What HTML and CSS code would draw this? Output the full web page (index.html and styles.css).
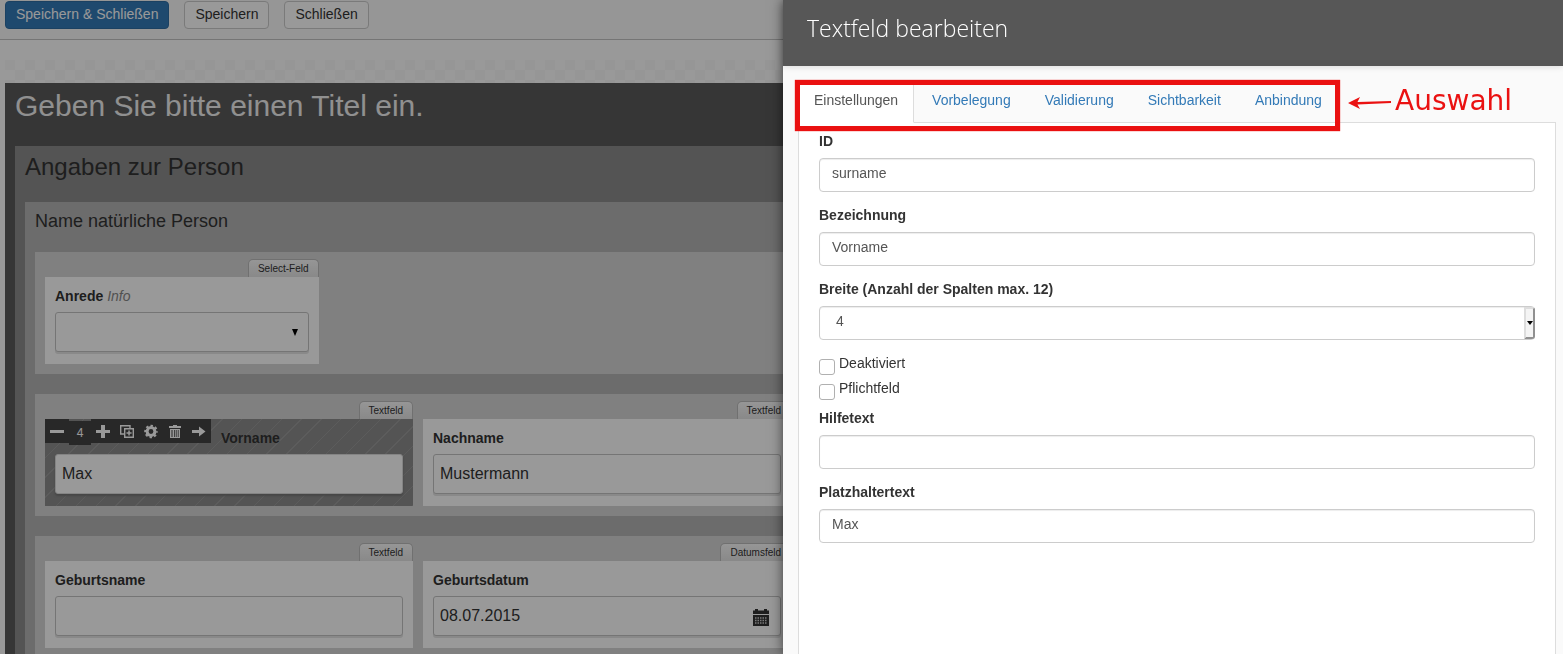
FILE: index.html
```html
<!DOCTYPE html>
<html lang="de">
<head>
<meta charset="utf-8">
<title>Textfeld bearbeiten</title>
<link rel="stylesheet" href="styles.css">
</head>
<body>
<div class="app">
  <header class="toolbar">
    <button class="btn btn-primary" type="button">Speichern &amp; Schließen</button>
    <button class="btn" type="button">Speichern</button>
    <button class="btn" type="button">Schließen</button>
  </header>

  <main class="canvas">
    <section class="form">
      <h1 class="form-title">Geben Sie bitte einen Titel ein.</h1>
      <section class="page">
        <h2 class="page-title">Angaben zur Person</h2>
        <section class="group">
          <h3 class="group-title">Name natürliche Person</h3>

          <div class="row">
            <div class="card span-3">
              <span class="tag">Select-Feld</span>
              <label class="card-label" for="anrede">Anrede <em class="info">Info</em></label>
              <div class="control">
                <select class="field" id="anrede"><option></option></select>
                <svg class="caret" viewBox="0 0 6 7" aria-hidden="true"><path d="M0 0h6L3 7z"/></svg>
              </div>
            </div>
          </div>

          <div class="row">
            <div class="card span-4 selected">
              <span class="tag">Textfeld</span>
              <div class="tools">
                <button class="tool" type="button" aria-label="Schmaler"><svg viewBox="0 0 24 24"><path d="M5 11h14v3H5z"/></svg></button>
                <span class="tool-value">4</span>
                <button class="tool" type="button" aria-label="Breiter"><svg viewBox="0 0 24 24"><path d="M10 6h4v5h5v3h-5v5h-4v-5H5v-3h5z"/></svg></button>
                <button class="tool" type="button" aria-label="Duplizieren"><svg viewBox="0 0 24 24"><path class="line" d="M9 15H5.700V6.700H15V9M9.700 9.700h8.600v8.600H9.700z"/><path d="M13.300 11.500h1.500v1.800h1.800v1.500h-1.800v1.800h-1.500v-1.800h-1.800v-1.500h1.800z"/></svg></button>
                <button class="tool" type="button" aria-label="Einstellungen"><svg viewBox="0 0 24 24"><g fill="none" stroke="currentColor"><circle cx="12" cy="12.500" r="3.900" stroke-width="3"/><circle cx="12" cy="12.500" r="5.800" stroke-width="2" stroke-dasharray="2.400 2.155" stroke-dashoffset="1.200"/></g></svg></button>
                <button class="tool" type="button" aria-label="Löschen"><svg viewBox="0 0 24 24"><path fill-rule="evenodd" d="M10 6h4v1h4v2H6V7h4zM7 10h10v9H7zM8.500 11v7h1v-7zM11 11v7h.8v-7zM12.800 11v7h.8v-7zM14.800 11v7h.8v-7z"/></svg></button>
                <button class="tool" type="button" aria-label="Verschieben"><svg viewBox="0 0 24 24"><path d="M5 11h7V7.500l6.500 5L12 17.500V14H5z"/></svg></button>
              </div>
              <label class="card-label" for="vorname">Vorname</label>
              <div class="control"><input class="field" id="vorname" type="text" value="Max"></div>
            </div>
            <div class="card span-4">
              <span class="tag">Textfeld</span>
              <label class="card-label" for="nachname">Nachname</label>
              <div class="control"><input class="field" id="nachname" type="text" value="Mustermann"></div>
            </div>
          </div>

          <div class="row">
            <div class="card span-4">
              <span class="tag">Textfeld</span>
              <label class="card-label" for="geburtsname">Geburtsname</label>
              <div class="control"><input class="field" id="geburtsname" type="text"></div>
            </div>
            <div class="card span-4">
              <span class="tag">Datumsfeld</span>
              <label class="card-label" for="geburtsdatum">Geburtsdatum</label>
              <div class="control">
                <input class="field" id="geburtsdatum" type="text" value="08.07.2015">
                <svg class="calendar" viewBox="0 0 16 17" aria-hidden="true"><path d="M0 1.500h2V0h3v1.500h6V0h3v1.500h2V5H0zM0 6h16v11H0z"/><path class="grid" d="M2 9h12.500M2 11.500h12.500M2 14h12.500"/></svg>
              </div>
            </div>
          </div>
        </section>
      </section>
    </section>
  </main>
  <div class="backdrop"></div>
</div>

<aside class="panel">
  <header class="panel-head"><h2 class="panel-title">Textfeld bearbeiten</h2></header>
  <div class="panel-body">
    <nav class="tabs">
      <a class="tab active" href="#einstellungen">Einstellungen</a>
      <a class="tab" href="#vorbelegung">Vorbelegung</a>
      <a class="tab" href="#validierung">Validierung</a>
      <a class="tab" href="#sichtbarkeit">Sichtbarkeit</a>
      <a class="tab" href="#anbindung">Anbindung</a>
      <div class="marker">
        <div class="marker-note">
          <svg class="marker-arrow" viewBox="0 0 43 16" aria-hidden="true"><path d="M0 10 12 4 9.500 9 43 8v2L9.500 11.500 12 16z"/></svg>
          <span>Auswahl</span>
        </div>
      </div>
    </nav>
    <form class="settings" id="einstellungen">
      <div class="setting"><label class="setting-label" for="id">ID</label><input class="input" id="id" type="text" value="surname"></div>
      <div class="setting"><label class="setting-label" for="bez">Bezeichnung</label><input class="input" id="bez" type="text" value="Vorname"></div>
      <div class="setting">
        <label class="setting-label" for="breite">Breite (Anzahl der Spalten max. 12)</label>
        <div class="select">
          <select class="input" id="breite"><option>4</option></select>
          <span class="select-button"><svg viewBox="0 0 6 4" aria-hidden="true"><path d="M0 0h6L3 4z"/></svg></span>
        </div>
      </div>
      <div class="checks">
        <label class="check"><input class="box" type="checkbox">Deaktiviert</label>
        <label class="check"><input class="box" type="checkbox">Pflichtfeld</label>
      </div>
      <div class="setting"><label class="setting-label" for="hilfe">Hilfetext</label><input class="input" id="hilfe" type="text"></div>
      <div class="setting"><label class="setting-label" for="platz">Platzhaltertext</label><input class="input" id="platz" type="text" value="Max"></div>
    </form>
  </div>
</aside>
</body>
</html>
```

FILE: styles.css
```css
* { box-sizing: border-box; }

body {
  margin: 0;
  color: #333;
  background: #fff;
  font: 14px/20px "Liberation Sans", Arial, sans-serif;
}

h1, h2, h3 { margin: 0; font-weight: normal; }

button, input, select { font: inherit; color: inherit; }

.app {
  position: relative;
  height: 100vh;
  overflow: hidden;
}

/* Toolbar */
.toolbar {
  display: flex;
  gap: 15px;
  padding: 1px 5px 10px;
  background: #fafafa;
  border-bottom: 1px solid #c4c4c4;
}

.btn {
  padding: 2px 10px 4px;
  border: 1px solid #ccc;
  border-radius: 4px;
  background: #fff;
}

.btn-primary {
  color: #fff;
  background: #337ab7;
  border-color: #2e6da4;
}

/* Form editor */
.canvas {
  margin: 20px 354px 0 5px;
  padding-top: 23px;
  background: conic-gradient(#fff 25%, #fafafa 0 50%, #fff 0 75%, #fafafa 0) 0 0 / 20px 20px;
}

.form { padding: 0 10px 10px; background: #5a5a5a; }
.form-title { padding: 3px 0 20px; color: #f0f0f0; font-size: 30px; line-height: 40px; }
.page { padding: 0 10px 10px; background: #8c8c8c; }
.page-title { padding: 6px 0 20px; font-size: 24px; line-height: 30px; }
.group { padding: 0 10px 20px; background: #b4b4b4; }
.group-title { padding: 9px 0 21px; font-size: 18px; line-height: 20px; }

.row {
  display: grid;
  grid-template-columns: repeat(12, 1fr);
  gap: 10px;
  padding: 25px 10px 10px;
  background: #d6d6d6;
}
.row + .row { margin-top: 20px; }

.card {
  position: relative;
  padding: 9px 10px 12px;
  background: #fff;
}
.span-3 { grid-column: span 3; }
.span-4 { grid-column: span 4; }

.tag {
  position: absolute;
  right: 0;
  bottom: 100%;
  height: 18px;
  padding: 0 9px;
  border: 1px solid #bbb;
  border-bottom: 0;
  border-radius: 5px 5px 0 0;
  background: linear-gradient(#fafafa, #e4e4e4);
  font-size: 10px;
  line-height: 17px;
}

.card-label {
  display: block;
  margin-bottom: 6px;
  font-weight: bold;
}
.info { color: #888; font-weight: normal; }

.control { position: relative; }

.field {
  display: block;
  width: 100%;
  height: 40px;
  padding: 0 6px;
  appearance: none;
  border: 1px solid #c4c4c4;
  border-radius: 3px;
  background: #fff;
  box-shadow: 0 2px 0 #e4e4e4;
  font-size: 16px;
}

.caret {
  position: absolute;
  top: 17px;
  right: 11px;
  width: 6px;
  height: 7px;
}

.calendar {
  position: absolute;
  top: 13px;
  right: 12px;
  width: 16px;
  height: 17px;
  fill: #333;
}
.grid {
  fill: none;
  stroke: #ccc;
  stroke-width: 1.500;
  stroke-dasharray: 1.500 1;
}

.selected {
  background: repeating-linear-gradient(135deg, #8c8c8c 0 13px, #9a9a9a 13px 14px);
}
.selected .card-label { padding-left: 166px; }
.selected .field { border-color: #ddd; box-shadow: 0 2px 2px #777; }

.tools {
  position: absolute;
  top: 0;
  left: 0;
  display: flex;
  height: 24px;
  color: #fff;
}
.tool {
  width: 24px;
  height: 24px;
  padding: 0;
  border: 0;
  background: #444;
}
.tool svg { display: block; width: 24px; height: 24px; fill: currentColor; }
.tool .line { fill: none; stroke: currentColor; stroke-width: 1.400; }
.tool-value {
  width: 22px;
  height: 24px;
  margin-top: 2px;
  background: #444;
  font-size: 12px;
  line-height: 24px;
  text-align: center;
}

.backdrop {
  position: absolute;
  inset: 0;
  background: rgba(0, 0, 0, .4);
}

/* Side panel */
.panel {
  position: fixed;
  top: 0;
  right: 0;
  bottom: 0;
  display: flex;
  flex-direction: column;
  width: 780px;
  background: #fafafa;
  box-shadow: 0 0 12px rgba(0, 0, 0, .6);
}

.panel-head {
  padding: 13px 24px 23px;
  color: #fff;
  background: #575757;
  box-shadow: 0 1px 6px rgba(0, 0, 0, .12);
}
.panel-title {
  font: 300 23px/30px "Open Sans", sans-serif;
}

.panel-body {
  display: flex;
  flex: 1;
  flex-direction: column;
  padding: 14px 7px 0 15px;
}

.tabs {
  position: relative;
  z-index: 1;
  display: flex;
  gap: 2px;
}
.tab {
  padding: 9px 15px 12px;
  border: 1px solid transparent;
  color: #337ab7;
  text-decoration: none;
}
.tab.active {
  color: #555;
  background: #fff;
  border-color: #ddd;
  border-bottom-color: #fff;
}

.marker {
  position: absolute;
  top: 0;
  left: -3px;
  width: 545px;
  height: 51px;
  border: 5px solid #ea1111;
  box-shadow: 0 0 1px #ea1111;
}
.marker-note {
  position: absolute;
  top: 0;
  left: 100%;
  display: flex;
  align-items: center;
  gap: 4px;
  margin-left: 13px;
  color: #ea1111;
  font: 28px/32px "DejaVu Sans", sans-serif;
}
.marker-arrow { width: 43px; height: 16px; fill: currentColor; }

.settings {
  flex: 1;
  margin-top: -1px;
  padding: 8px 20px;
  border: 1px solid #ddd;
  border-bottom: 0;
  background: #fff;
}

.setting { margin-bottom: 13px; }
.setting-label {
  display: block;
  margin-bottom: 7px;
  font-weight: bold;
}

.input {
  display: block;
  width: 100%;
  height: 34px;
  padding: 0 12px 5px;
  appearance: none;
  border: 1px solid #ccc;
  border-radius: 4px;
  color: #555;
  background: #fff;
  box-shadow: inset 0 1px 1px rgba(0, 0, 0, .075);
}

.select { position: relative; }
.select .input { padding-left: 16px; }
.select-button {
  position: absolute;
  top: 1px;
  right: 0;
  bottom: 1px;
  display: flex;
  align-items: center;
  justify-content: center;
  width: 11px;
  border: 2px solid;
  border-color: #ddd #909090 #909090 #ddd;
  border-radius: 0 3px 3px 0;
  background: #f4f4f4;
}
.select-button svg { flex: none; width: 6px; height: 4px; }

.checks { padding-bottom: 5px; }
.check {
  display: flex;
  gap: 4px;
  margin-bottom: 5px;
}
.box {
  width: 16px;
  height: 16px;
  margin: 6px 0 -2px;
  appearance: none;
  border: 1px solid #b0b0b0;
  border-radius: 3px;
  background: #fff;
}
```
